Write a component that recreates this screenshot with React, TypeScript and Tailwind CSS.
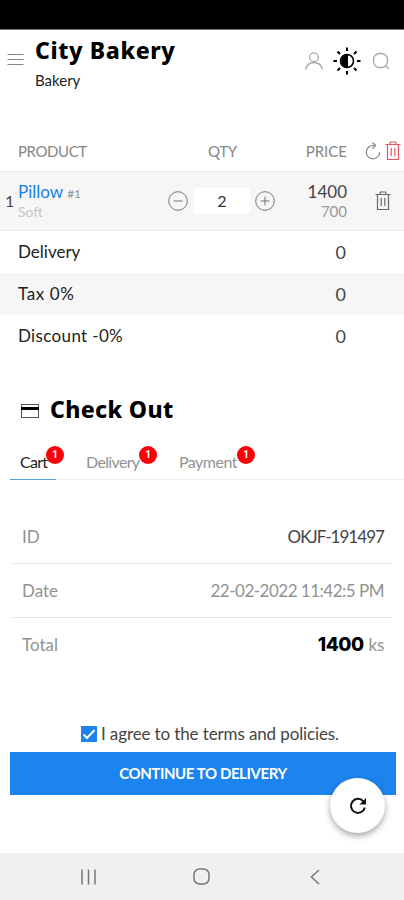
import type { ReactNode } from "react";

const thin = { fill: "none", stroke: "currentColor", strokeWidth: 1 } as const;

function Trash({ className }: { className: string }) {
  return (
    <svg className={className} width="16" height="20" viewBox="0 0 16 20" {...thin} strokeWidth={1.2}>
      <path d="M0.5 3.5H15.5M4.5 3.5L5.500 1H10.500L11.500 3.500M2.5 3.5V18.5H13.5V3.5M6.2 7V15M9.8 7V15" />
    </svg>
  );
}

function SummaryRow({ label, shaded, tracking }: { label: string; shaded?: boolean; tracking: string }) {
  return (
    <div className={`flex h-[42px] items-center justify-between pl-[18px] pr-[58px] text-[17px] text-[#222] ${shaded ? "bg-[#f6f6f6]" : "bg-white"}`}>
      <span className={tracking}>{label}</span>
      <span className="text-[18px] leading-[20px] text-[#444]">0</span>
    </div>
  );
}

function Tab({ label, className, active }: { label: string; className: string; active?: boolean }) {
  return (
    <div className={`relative h-[35px] shrink-0 pt-[6px] leading-[22px] ${active ? "border-b border-b-[#5aa2d6] text-[#222]" : "text-[#929292]"} ${className}`}>
      {label}
      <span className="absolute top-px right-[-8px] flex size-[18px] items-center justify-center rounded-full bg-[#fb0007] font-['Roboto',sans-serif] text-[10px] font-bold tracking-normal text-white">
        1
      </span>
    </div>
  );
}

function Detail({ label, children, last }: { label: string; children: ReactNode; last?: boolean }) {
  return (
    <div className={`flex h-[54px] items-center justify-between pl-[10px] pr-[8px] text-[17px] text-[#929292] ${last ? "" : "border-b border-[#e8e8e8]"}`}>
      <span>{label}</span>
      {children}
    </div>
  );
}

export default function App() {
  return (
    <div className="relative flex h-[900px] w-[404px] flex-col overflow-hidden bg-white font-['Lato',sans-serif]">
      <div className="h-[30px] shrink-0 border-b border-[#777] bg-black" />
      <header className="flex h-[100px] shrink-0 items-start">
        <svg className="ml-[7px] mt-[22px] text-[#858585]" width="17" height="15" viewBox="0 0 17 15" {...thin}>
          <path d="M0.5 2.500H16.5M0.5 7.5H16.5M0.5 12.500H16.5" />
        </svg>
        <div className="ml-[11px] mt-[4px] flex-1">
          <h1 className="whitespace-nowrap font-['Noto_Sans',sans-serif] text-[23px] font-extrabold leading-[32px] tracking-[0.6px] text-black">City Bakery</h1>
          <div className="mt-[3px] text-[15px] leading-[22px] text-[#222]">Bakery</div>
        </div>
        <div className="mr-[14px] mt-[17px] flex items-center">
          <svg className="text-[#aaa]" width="20" height="20" viewBox="0 0 20 20" {...thin} strokeWidth={1.3}>
            <circle cx="9" cy="6.3" r="4.4" />
            <path d="M.5 18.500C1.700 13.600 4.400 11.500 9 11.500S16.300 13.600 17.500 18.500" />
          </svg>
          <svg className="ml-[8px] mr-px text-black" width="28" height="28" viewBox="0 0 28 28" fill="none" stroke="currentColor" strokeWidth="2">
            <circle cx="14" cy="14" r="6.5" strokeWidth="1.6" />
            <path d="M15 7A7 7 0 0 0 15 21Z" fill="currentColor" stroke="none" />
            <path d="M14 .5V4M14 24V27.5M.5 14H4M24 14H27.5M4.5 4.5L7 7M21 21L23.500 23.500M4.500 23.500L7 21M21 7L23.500 4.500" />
          </svg>
          <svg className="ml-[10px] text-[#aaa]" width="18" height="18" viewBox="0 0 18 18" {...thin} strokeWidth={1.3}>
            <rect x="1.500" y="1.500" width="14" height="14" rx="6" />
            <path d="M13.500 14L17 17" />
          </svg>
        </div>
      </header>

      <section className="shrink-0">
        <div className="flex h-[42px] items-center border-b border-[#ebebeb] pl-[18px] pt-px text-[15px] text-[#858585]">
          <span className="w-[190px] tracking-[-0.4px]">PRODUCT</span>
          <span className="w-[60px] tracking-[-0.3px]">QTY</span>
          <span className="w-[79px] text-right">PRICE</span>
          <svg className="ml-[18px]" width="16" height="18" viewBox="0 0 16 18" {...thin} strokeWidth={1.2}>
            <path d="M9.500 3.500H8A6.700 6.700 0 1 0 14.700 10.200M7.500 .5L10.500 3.500L7.500 6.500" />
          </svg>
          <Trash className="ml-[4px] text-[#e9535c]" />
        </div>
        <div className="flex h-[59px] items-center border-b border-[#efefef] bg-[#f6f6f6]">
          <span className="w-[18px] pl-[5px] text-[16px] text-[#444]">1</span>
          <div className="w-[150px]">
            <div className="text-[17px] leading-[20px] text-[#1680ed]">
              Pillow <span className="text-[12px] text-[#929292]">#1</span>
            </div>
            <div className="text-[14px] leading-[16px] text-[#c6c6c6]">Soft</div>
          </div>
          <svg className="text-[#777]" width="20" height="20" viewBox="0 0 20 20" {...thin}>
            <circle cx="10" cy="10" r="9.300" />
            <path d="M5.500 10H14.500" />
          </svg>
          <div className="ml-[6px] flex h-[26px] w-[56px] items-center justify-center rounded-[4px] bg-white text-[16px] text-[#333]">2</div>
          <svg className="ml-[5px] text-[#777]" width="20" height="20" viewBox="0 0 20 20" {...thin}>
            <circle cx="10" cy="10" r="9.300" />
            <path d="M5.500 10H14.500M10 5.500V14.500" />
          </svg>
          <div className="w-[72px] text-right">
            <div className="text-[17px] leading-[20px] text-[#444]">1400</div>
            <div className="text-[15px] leading-[18px] text-[#999]">700</div>
          </div>
          <Trash className="ml-[28px] text-[#666]" />
        </div>
        <SummaryRow label="Delivery" tracking="" />
        <SummaryRow label="Tax 0%" shaded tracking="tracking-[0.6px]" />
        <SummaryRow label="Discount -0%" tracking="tracking-[0.35px]" />
      </section>

      <h2 className="mt-[35px] flex h-[34px] shrink-0 items-center pl-[21px] font-['Noto_Sans',sans-serif] text-[23px] font-extrabold tracking-[0.35px] text-black">
        <svg className="mr-[11px] mt-[4px]" width="18" height="14" viewBox="0 0 18 14" {...thin}>
          <rect x=".5" y=".5" width="17" height="13" stroke="#555" />
          <path d="M0 4.500H18" strokeWidth="3" />
        </svg>
        Check Out
      </h2>
      <nav className="ml-[10px] mt-[19px] flex h-[35px] shrink-0 border-b border-[#eee]">
        <Tab label="Cart" active className="w-[46px] pl-[10px] text-[16px] tracking-[-0.7px]" />
        <Tab label="Delivery" className="ml-[30px] w-[63px] text-[16px] tracking-[-0.65px]" />
        <Tab label="Payment" className="ml-[30px] w-[68px] text-[16px] tracking-[-0.5px]" />
      </nav>

      <section className="mx-[12px] mt-[30px] shrink-0">
        <Detail label="ID">
          <span className="tracking-[-0.95px] text-[#444]">OKJF-191497</span>
        </Detail>
        <Detail label="Date">
          <span className="tracking-[-0.5px]">22-02-2022 11:42:5 PM</span>
        </Detail>
        <Detail label="Total" last>
          <span className="tracking-[-0.3px]">
            <b className="mr-px font-['Inter',sans-serif] text-[19px] font-extrabold tracking-[-0.5px] text-black">1400</b> ks
          </span>
        </Detail>
      </section>

      <label className="mt-[52px] flex h-[20px] shrink-0 items-center pl-[81px] text-[17px] tracking-[-0.12px] text-[#444]">
        <span className="mr-[4px] flex size-[16px] items-center justify-center bg-[#1c84ee]">
          <svg width="14" height="14" viewBox="0 0 14 14" fill="none" stroke="white" strokeWidth="2">
            <path d="M1.500 7.500L5 11L12.500 3" />
          </svg>
        </span>
        I agree to the terms and policies.
      </label>
      <button className="ml-[10px] mt-[8px] flex h-[43px] w-[386px] shrink-0 items-center justify-center bg-[#1c84ee] text-[15px] font-bold tracking-[-0.42px] text-white">
        CONTINUE TO DELIVERY
      </button>
      <button className="absolute left-[330px] top-[778px] flex size-[55px] items-center justify-center rounded-full bg-white text-[#111] shadow-[0_3px_6px_rgba(0,0,0,0.35)]">
        <svg width="18" height="18" viewBox="0 0 18 18" fill="none" stroke="currentColor" strokeWidth="2">
          <path d="M15.800 10.500A7 7 0 1 1 14.300 4.300" />
          <path d="M17 1V7.500H10.500Z" fill="currentColor" stroke="none" />
        </svg>
      </button>

      <footer className="mt-auto flex h-[47px] shrink-0 items-center bg-[#f0f0f0] text-[#777]">
        <svg className="ml-[80px]" width="17" height="16" viewBox="0 0 17 16" {...thin} strokeWidth={1.500}>
          <path d="M2 .5V15.500M8.500 .5V15.500M15 .5V15.500" />
        </svg>
        <svg className="ml-[96px]" width="17" height="17" viewBox="0 0 17 17" {...thin} strokeWidth={1.500}>
          <rect x="1" y="1" width="15" height="15" rx="5.500" />
        </svg>
        <svg className="ml-[100px]" width="10" height="16" viewBox="0 0 10 16" {...thin} strokeWidth={1.500}>
          <path d="M9 1L1.500 8L9 15" />
        </svg>
      </footer>
    </div>
  );
}
